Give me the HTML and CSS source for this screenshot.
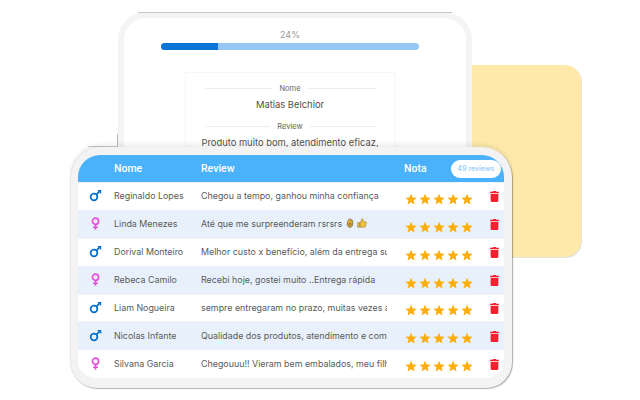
FILE: index.html
```html
<!DOCTYPE html>
<html lang="pt">
<head>
<meta charset="utf-8">
<title>Reviews</title>
<link rel="stylesheet" href="styles.css">
</head>
<body>
<svg class="defs" width="0" height="0" aria-hidden="true">
  <symbol id="male" viewBox="0 0 14 14"><circle cx="5.400" cy="8.600" r="3.600" fill="none" stroke="currentColor" stroke-width="1.900"/><path d="M8 6l3.600-3.600" stroke="currentColor" stroke-width="1.900" fill="none"/><path d="M8.800 1h4.400v4.400z" fill="currentColor"/></symbol>
  <symbol id="female" viewBox="0 0 14 14"><circle cx="7" cy="4.600" r="3.300" fill="none" stroke="currentColor" stroke-width="1.800"/><path d="M7 8v5.600M4.400 11h5.200" stroke="currentColor" stroke-width="1.800" fill="none"/></symbol>
  <symbol id="star" viewBox="0 0 24 24"><path d="M12 1.500l3.200 7.300 7.900.8-6 5.300 1.800 7.800L12 18.600l-6.900 4.100 1.800-7.800-6-5.300 7.900-.8z" fill="currentColor"/></symbol>
  <symbol id="trash" viewBox="0 0 10 12"><path d="M3.400 0h3.200l.6.800H10V2H0V.8h2.800zM.7 2.900h8.600V10.800c0 .7-.5 1.200-1.200 1.200H1.900C1.200 12 .7 11.500.7 10.800z" fill="currentColor"/></symbol>
</svg>
<main class="stage">
  <div class="sun"></div>

  <section class="back">
    <div class="percent">24%</div>
    <div class="track"><div class="fill"></div></div>
    <div class="sheet">
      <div class="rule"><span>Nome</span></div>
      <div class="value">Matias Belchior</div>
      <div class="rule"><span>Review</span></div>
      <div class="value">Produto muito bom, atendimento eficaz,</div>
    </div>
  </section>

  <div class="notch"></div>

  <section class="front">
    <div class="head">
      <span></span>
      <span>Nome</span>
      <span>Review</span>
      <span>Nota</span>
      <span class="pill">49 reviews</span>
    </div>

    <div class="row">
      <span class="c-icon"><svg class="sex male"><use href="#male"/></svg></span>
      <span class="c-name">Reginaldo Lopes</span>
      <span class="c-review">Chegou a tempo, ganhou minha confiança</span>
      <span class="stars"><svg><use href="#star"/></svg><svg><use href="#star"/></svg><svg><use href="#star"/></svg><svg><use href="#star"/></svg><svg><use href="#star"/></svg></span>
      <svg class="trash"><use href="#trash"/></svg>
    </div>
    <div class="row">
      <span class="c-icon"><svg class="sex female"><use href="#female"/></svg></span>
      <span class="c-name">Linda Menezes</span>
      <span class="c-review">Até que me surpreenderam rsrsrs <svg class="emoji" viewBox="0 0 12 12"><path d="M6 .8c.8 0 1 1 1 2l1.500-.6c.6.6.9 2 .9 3.800C9.400 9.500 8 11.200 6 11.200S2.600 9.700 2.600 7.300C2.600 4.500 4.800.8 6 .8z" fill="#e3a92f" stroke="#6a5a30" stroke-width=".8"/><circle cx="6" cy="7.500" r="1.300" fill="none" stroke="#6a5a30" stroke-width=".8"/></svg> <svg class="emoji" viewBox="0 0 12 12"><path d="M.8 5.500h2.400v5.500H.8zM3.800 5.500L6 .8c1 0 1.500.8 1.300 1.800L7 4.500h3.400c.7 0 1 .7.800 1.300L10 10.300c-.2.500-.6.700-1 .7H3.800z" fill="#f5c33b" stroke="#8a6a20" stroke-width=".6"/></svg></span>
      <span class="stars"><svg><use href="#star"/></svg><svg><use href="#star"/></svg><svg><use href="#star"/></svg><svg><use href="#star"/></svg><svg><use href="#star"/></svg></span>
      <svg class="trash"><use href="#trash"/></svg>
    </div>
    <div class="row">
      <span class="c-icon"><svg class="sex male"><use href="#male"/></svg></span>
      <span class="c-name">Dorival Monteiro</span>
      <span class="c-review">Melhor custo x benefício, além da entrega super rápida</span>
      <span class="stars"><svg><use href="#star"/></svg><svg><use href="#star"/></svg><svg><use href="#star"/></svg><svg><use href="#star"/></svg><svg><use href="#star"/></svg></span>
      <svg class="trash"><use href="#trash"/></svg>
    </div>
    <div class="row">
      <span class="c-icon"><svg class="sex female"><use href="#female"/></svg></span>
      <span class="c-name">Rebeca Camilo</span>
      <span class="c-review">Recebi hoje, gostei muito ..Entrega rápida</span>
      <span class="stars"><svg><use href="#star"/></svg><svg><use href="#star"/></svg><svg><use href="#star"/></svg><svg><use href="#star"/></svg><svg><use href="#star"/></svg></span>
      <svg class="trash"><use href="#trash"/></svg>
    </div>
    <div class="row">
      <span class="c-icon"><svg class="sex male"><use href="#male"/></svg></span>
      <span class="c-name">Liam Nogueira</span>
      <span class="c-review">sempre entregaram no prazo, muitas vezes antes da data</span>
      <span class="stars"><svg><use href="#star"/></svg><svg><use href="#star"/></svg><svg><use href="#star"/></svg><svg><use href="#star"/></svg><svg><use href="#star"/></svg></span>
      <svg class="trash"><use href="#trash"/></svg>
    </div>
    <div class="row">
      <span class="c-icon"><svg class="sex male"><use href="#male"/></svg></span>
      <span class="c-name">Nicolas Infante</span>
      <span class="c-review">Qualidade dos produtos, atendimento e compromisso</span>
      <span class="stars"><svg><use href="#star"/></svg><svg><use href="#star"/></svg><svg><use href="#star"/></svg><svg><use href="#star"/></svg><svg><use href="#star"/></svg></span>
      <svg class="trash"><use href="#trash"/></svg>
    </div>
    <div class="row">
      <span class="c-icon"><svg class="sex female"><use href="#female"/></svg></span>
      <span class="c-name">Silvana Garcia</span>
      <span class="c-review">Chegouuu!! Vieram bem embalados, meu filho adorou</span>
      <span class="stars"><svg><use href="#star"/></svg><svg><use href="#star"/></svg><svg><use href="#star"/></svg><svg><use href="#star"/></svg><svg><use href="#star"/></svg></span>
      <svg class="trash"><use href="#trash"/></svg>
    </div>
  </section>
</main>
</body>
</html>
```

FILE: styles.css
```css
* { box-sizing: border-box; }
html, body { margin: 0; padding: 0; background: #fff; }
body { font-family: Inter, "Liberation Sans", sans-serif; overflow: hidden; }
.defs { position: absolute; }
.stage { position: relative; width: 640px; height: 400px; overflow: hidden; }

.sun {
  position: absolute; left: 440px; top: 65px; width: 141px; height: 192px;
  background: #fee9aa; border-radius: 16px;
  box-shadow: 1px 1px 0 #e4e4da;
}

.back {
  position: absolute; left: 118px; top: 12px; width: 354px; height: 160px;
  background: #fff; border: 6px solid #f4f4f5; border-bottom: 0;
  border-radius: 28px 28px 0 0;
  padding: 0 47px 0 37px;
}
.back::before {
  content: ""; position: absolute; left: 14px; right: 14px; top: -6px;
  border-top: 1px solid #c6c6c6;
}
.percent { margin-top: 10px; height: 14px; font-size: 9px; line-height: 14px; text-align: center; color: #999; }
.track { margin-top: 1px; height: 7px; border-radius: 3.500px; background: #94c8f3; overflow: hidden; }
.fill { width: 57px; height: 100%; background: #0c76d6; }

.sheet {
  width: 211px; margin: 22px auto 0; height: 120px;
  border: 1px solid #f6f6f6; border-bottom: 0; padding: 8px 19px 0; text-align: center;
}
.rule { display: flex; align-items: center; gap: 7px; height: 14px; font-size: 7.500px; color: #666; }
.rule::before, .rule::after { content: ""; flex: 1; border-top: 1px solid #ececec; }
.value { font-size: 9.400px; line-height: 14px; color: #505050; margin: 3px -19px 7px; white-space: nowrap; }

.notch {
  position: absolute; left: 88px; top: 134px; width: 30px; height: 13px;
  border-right: 1px solid #b8b8b8; border-bottom: 1px solid #c8c8c8;
}

.front {
  position: absolute; left: 71px; top: 147px; width: 441px; height: 241px;
  background: #fff; background-clip: padding-box;
  border: solid #f3f3f4; border-width: 8px 8px 10px 7px;
  border-radius: 30px 30px 26px 26px;
  box-shadow: 0 -3px 4px rgba(0,0,0,.07), 1px 1px 1px rgba(0,0,0,.3), -1px 0 1px rgba(0,0,0,.07);
}
.head {
  display: grid; grid-template-columns: 36px 87px 203px 1fr auto; align-items: center;
  height: 27px; background: #4ab2fb; color: #fff; font-family: Roboto, sans-serif; font-weight: 500; font-size: 10.500px;
  border-radius: 22px 22px 0 0;
}
.row {
  display: grid; grid-template-columns: 36px 87px 204px 85px 1fr; align-items: center;
  height: 27.900px; font-size: 8.900px; color: #5a5a5a; background: #fff; box-shadow: inset 0 1px 0 #eef2f6;
}
.row:nth-child(odd) { background: #e8f1fb; }
.row:last-child { border-radius: 0 0 16px 16px; }
.c-icon { display: flex; justify-content: center; padding-right: 1px; }
.sex { width: 13px; height: 13px; display: block; }
.male { color: #0b71c9; }
.female { color: #e64fdb; }
.c-name, .c-review { overflow: hidden; white-space: nowrap; }
.c-name { width: 70px; }
.c-review { width: 186px; }
.emoji { width: 10px; height: 10px; vertical-align: -1px; }
.stars { display: flex; gap: 1.900px; margin-top: 6px; color: #fdae0c; }
.stars svg { width: 12.100px; height: 12.100px; display: block; }
.trash { width: 9px; height: 11px; color: #f5212f; margin-top: 2px; display: block; }
.pill {
  width: 50px; height: 18px; margin-right: 3px; border-radius: 9px; background: #fff;
  color: #93c8f8; font-size: 7px; line-height: 18px; text-align: center; font-family: Inter, sans-serif; font-weight: 500;
}
```
